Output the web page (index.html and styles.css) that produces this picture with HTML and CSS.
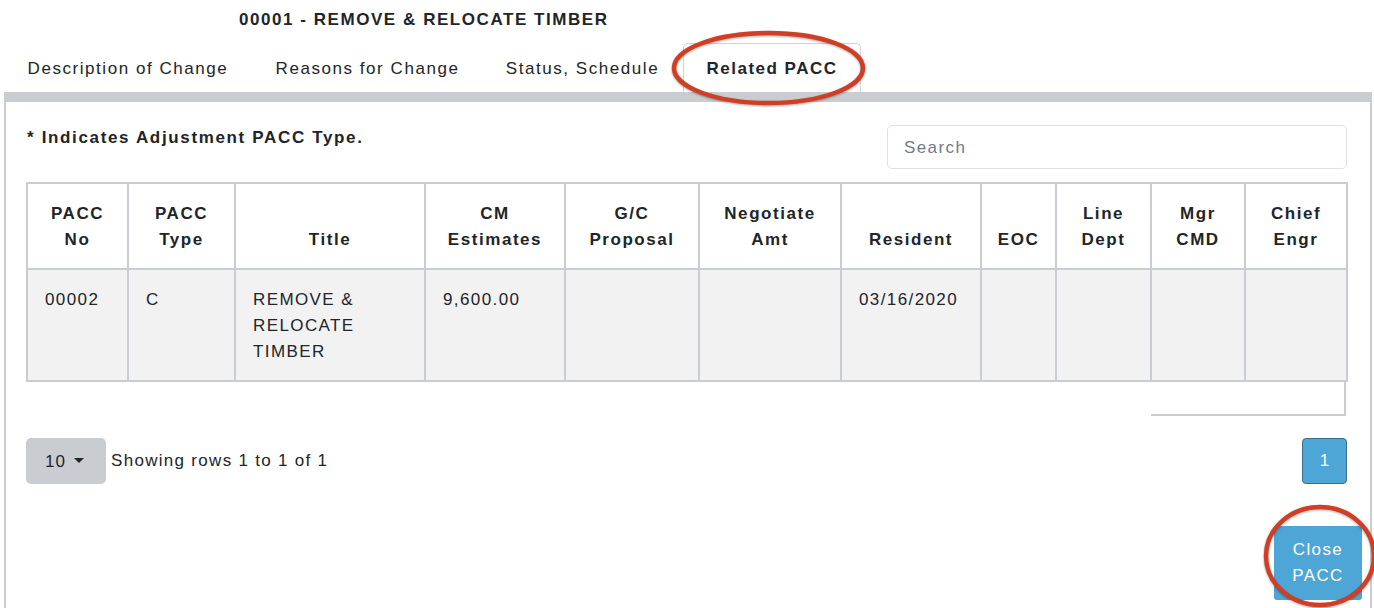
FILE: index.html
```html
<!DOCTYPE html>
<html lang="en">
<head>
<meta charset="utf-8">
<title>Related PACC</title>
<link rel="stylesheet" href="styles.css">
</head>
<body>
<div class="page">
  <h1 class="title">00001 - REMOVE &amp; RELOCATE TIMBER</h1>
  <nav class="tabs">
    <a class="tab tab-desc">Description of Change</a>
    <a class="tab tab-reason">Reasons for Change</a>
    <a class="tab tab-status">Status, Schedule</a>
    <a class="tab tab-related active">Related PACC</a>
  </nav>
  <section class="panel">
    <div class="panel-body">
      <div class="toolbar">
        <p class="note">* Indicates Adjustment PACC Type.</p>
        <input class="search" type="text" placeholder="Search">
      </div>
      <table class="grid">
        <colgroup>
          <col class="c1"><col class="c2"><col class="c3"><col class="c4"><col class="c5"><col class="c6"><col class="c7"><col class="c8"><col class="c9"><col class="c10"><col class="c11">
        </colgroup>
        <thead>
          <tr>
            <th>PACC<br>No</th>
            <th>PACC<br>Type</th>
            <th>Title</th>
            <th>CM<br>Estimates</th>
            <th>G/C<br>Proposal</th>
            <th>Negotiate<br>Amt</th>
            <th>Resident</th>
            <th>EOC</th>
            <th>Line<br>Dept</th>
            <th>Mgr<br>CMD</th>
            <th>Chief<br>Engr</th>
          </tr>
        </thead>
        <tbody>
          <tr>
            <td>00002</td>
            <td>C</td>
            <td>REMOVE &amp;<br>RELOCATE<br>TIMBER</td>
            <td>9,600.00</td>
            <td></td>
            <td></td>
            <td>03/16/2020</td>
            <td></td>
            <td></td>
            <td></td>
            <td></td>
          </tr>
        </tbody>
      </table>
      <div class="table-stub"></div>
      <div class="pager">
        <div class="pager-left">
          <button class="size-btn" type="button">10 <span class="caret"></span></button>
          <span class="rows-info">Showing rows 1 to 1 of 1</span>
        </div>
        <button class="page-btn" type="button">1</button>
      </div>
    </div>
    <div class="panel-footer">
      <button class="close-btn" type="button">Close<br>PACC</button>
    </div>
  </section>
  <svg class="marks" width="1374" height="608" viewBox="0 0 1374 608" aria-hidden="true">
    <ellipse class="mark" cx="768.5" cy="68" rx="94.5" ry="35"></ellipse>
    <ellipse class="mark" cx="1320" cy="556" rx="54" ry="49"></ellipse>
  </svg>
</div>
</body>
</html>
```

FILE: styles.css
```css
html, body {
  margin: 0;
  padding: 0;
  height: 608px;
  overflow: hidden;
  background: #ffffff;
}

body {
  font-family: "Liberation Sans", Arial, sans-serif;
  font-size: 17px;
  line-height: 26px;
  letter-spacing: 1.4px;
  color: #212529;
}

.page {
  position: relative;
  height: 608px;
}

.title {
  margin: 0;
  padding: 7px 0 10px 239px;
  font-size: 17px;
  line-height: 26px;
  font-weight: bold;
  letter-spacing: 1.55px;
  color: #212529;
}

.tabs {
  display: flex;
  padding-left: 3px;
  height: 49px;
}

.tab {
  box-sizing: border-box;
  display: block;
  padding: 12px 0 11px;
  border: 1px solid transparent;
  border-bottom: none;
  border-radius: 5px 5px 0 0;
  color: #212529;
  text-align: center;
  letter-spacing: 1.55px;
  white-space: nowrap;
}

.tab-desc { width: 250px; }
.tab-reason { width: 229px; }
.tab-status { width: 201px; }
.tab-related { width: 178px; }

.tab.active {
  border-color: #cfd3d7;
  font-weight: bold;
  letter-spacing: 1.5px;
}

.panel {
  box-sizing: border-box;
  margin: 0 2px 0 4px;
  height: 516px;
  border-top: 10px solid #c9cdd2;
  border-left: 2px solid #c9cdd2;
  border-right: 2px solid #c9cdd2;
}

.panel-body {
  padding: 23px 23px 0 20px;
}

.toolbar {
  display: flex;
  justify-content: space-between;
  align-items: flex-start;
}

.note {
  margin: 0 0 0 1px;
  font-weight: bold;
  letter-spacing: 1.65px;
}

.search {
  box-sizing: border-box;
  width: 460px;
  height: 44px;
  padding: 1px 16px 0;
  border: 1px solid #dfe2e5;
  border-radius: 5px;
  font-family: inherit;
  font-size: 17px;
  letter-spacing: 1.4px;
  color: #212529;
  outline: none;
}

.search::placeholder {
  color: #737b83;
}

.grid {
  margin-top: 13px;
  width: 1320px;
  table-layout: fixed;
  border-collapse: collapse;
}

.c1 { width: 101px; }
.c2 { width: 107px; }
.c3 { width: 190px; }
.c4 { width: 140px; }
.c5 { width: 134px; }
.c6 { width: 142px; }
.c7 { width: 140px; }
.c8 { width: 75px; }
.c9 { width: 95px; }
.c10 { width: 94px; }
.c11 { width: 102px; }

.grid th,
.grid td {
  border: 2px solid #c9cdd2;
  padding: 17px 16px 15px;
  line-height: 26px;
}

.grid th {
  text-align: center;
  vertical-align: bottom;
  font-weight: bold;
  letter-spacing: 1.55px;
  background: #ffffff;
  padding-left: 2px;
  padding-right: 2px;
}

.grid td {
  text-align: left;
  vertical-align: top;
  background: #f2f2f2;
  padding-left: 17px;
}

.table-stub {
  box-sizing: border-box;
  margin-left: auto;
  margin-right: 1px;
  width: 195px;
  height: 34px;
  border-right: 2px solid #c9cdd2;
  border-bottom: 2px solid #c9cdd2;
}

.pager {
  display: flex;
  justify-content: space-between;
  align-items: center;
  margin-top: 22px;
}

.pager-left {
  display: flex;
  align-items: center;
  gap: 5px;
}

.size-btn {
  box-sizing: border-box;
  display: flex;
  align-items: center;
  gap: 8px;
  width: 80px;
  height: 46px;
  padding: 2px 0 0 19px;
  border: none;
  border-radius: 5px;
  background: #c9cdd2;
  font-family: inherit;
  font-size: 17px;
  letter-spacing: 1px;
  color: #212529;
}

.caret {
  display: block;
  width: 0;
  height: 0;
  margin-top: -4px;
  border-top: 5px solid #212529;
  border-left: 5px solid transparent;
  border-right: 5px solid transparent;
}

.rows-info {
  white-space: nowrap;
  letter-spacing: 1.3px;
}

.page-btn {
  box-sizing: border-box;
  width: 45px;
  height: 46px;
  padding: 0;
  border: 1px solid #3f6d8d;
  border-radius: 4px;
  background: #4ea6d6;
  color: #ffffff;
  font-family: inherit;
  font-size: 17px;
}

.panel-footer {
  display: flex;
  justify-content: flex-end;
  padding: 42px 8px 0 0;
}

.close-btn {
  box-sizing: border-box;
  width: 88px;
  height: 74px;
  padding: 0;
  border: none;
  border-radius: 3px;
  background: #4ea6d6;
  color: #ffffff;
  font-family: inherit;
  font-size: 17px;
  line-height: 26px;
  letter-spacing: 1.4px;
  text-align: center;
}

.marks {
  position: absolute;
  top: 0;
  left: 0;
  pointer-events: none;
}

.mark {
  fill: none;
  stroke: #d13e24;
  stroke-width: 4.5;
  filter: drop-shadow(0 1px 1px rgba(0, 0, 0, 0.35));
}
```
